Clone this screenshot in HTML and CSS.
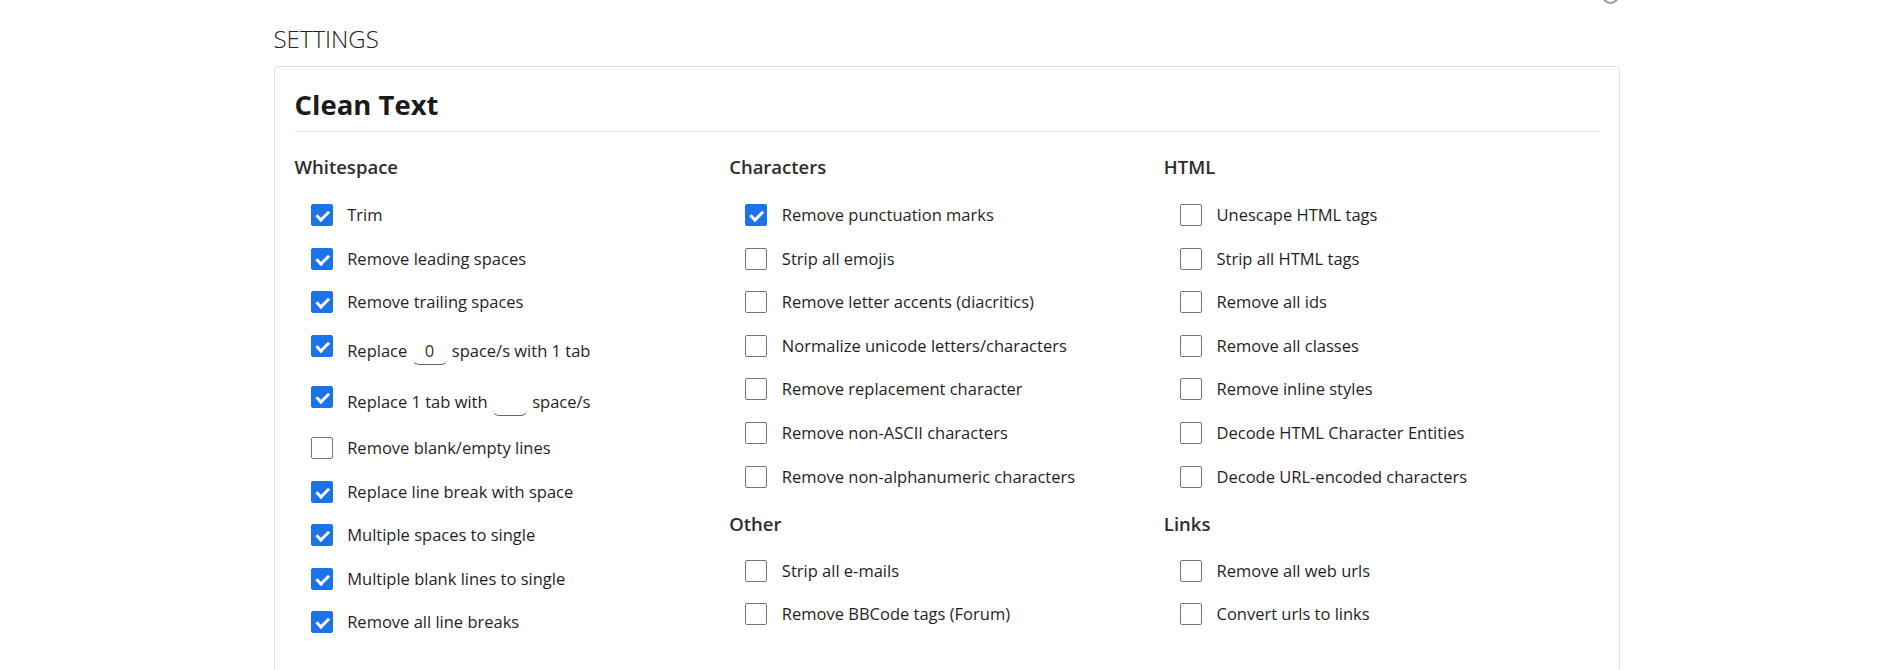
FILE: index.html
```html
<!DOCTYPE html>
<html lang="en">
<head>
<meta charset="utf-8">
<title>Settings - Clean Text</title>
<link rel="stylesheet" href="styles.css">
</head>
<body>
<div class="page">
  <span class="help-icon"></span>
  <div class="page-title">SETTINGS</div>
  <section class="card">
    <h2 class="card-title">Clean Text</h2>
    <div class="grid">
      <div class="col">
        <h3 class="group-title">Whitespace</h3>
        <div class="list">
          <label class="opt"><input type="checkbox" checked><span class="txt">Trim</span></label>
          <label class="opt"><input type="checkbox" checked><span class="txt">Remove leading spaces</span></label>
          <label class="opt"><input type="checkbox" checked><span class="txt">Remove trailing spaces</span></label>
          <label class="opt tall"><input type="checkbox" checked><span class="txt">Replace <input class="num" type="text" value="0"> space/s with 1 tab</span></label>
          <label class="opt tall"><input type="checkbox" checked><span class="txt">Replace 1 tab with <input class="num" type="text" value=""> space/s</span></label>
          <label class="opt"><input type="checkbox"><span class="txt">Remove blank/empty lines</span></label>
          <label class="opt"><input type="checkbox" checked><span class="txt">Replace line break with space</span></label>
          <label class="opt"><input type="checkbox" checked><span class="txt">Multiple spaces to single</span></label>
          <label class="opt"><input type="checkbox" checked><span class="txt">Multiple blank lines to single</span></label>
          <label class="opt"><input type="checkbox" checked><span class="txt">Remove all line breaks</span></label>
        </div>
      </div>
      <div class="col">
        <h3 class="group-title">Characters</h3>
        <div class="list">
          <label class="opt"><input type="checkbox" checked><span class="txt">Remove punctuation marks</span></label>
          <label class="opt"><input type="checkbox"><span class="txt">Strip all emojis</span></label>
          <label class="opt"><input type="checkbox"><span class="txt">Remove letter accents (diacritics)</span></label>
          <label class="opt"><input type="checkbox"><span class="txt">Normalize unicode letters/characters</span></label>
          <label class="opt"><input type="checkbox"><span class="txt">Remove replacement character</span></label>
          <label class="opt"><input type="checkbox"><span class="txt">Remove non-ASCII characters</span></label>
          <label class="opt"><input type="checkbox"><span class="txt">Remove non-alphanumeric characters</span></label>
        </div>
        <h3 class="group-title next">Other</h3>
        <div class="list">
          <label class="opt"><input type="checkbox"><span class="txt">Strip all e-mails</span></label>
          <label class="opt"><input type="checkbox"><span class="txt">Remove BBCode tags (Forum)</span></label>
        </div>
      </div>
      <div class="col">
        <h3 class="group-title">HTML</h3>
        <div class="list">
          <label class="opt"><input type="checkbox"><span class="txt">Unescape HTML tags</span></label>
          <label class="opt"><input type="checkbox"><span class="txt">Strip all HTML tags</span></label>
          <label class="opt"><input type="checkbox"><span class="txt">Remove all ids</span></label>
          <label class="opt"><input type="checkbox"><span class="txt">Remove all classes</span></label>
          <label class="opt"><input type="checkbox"><span class="txt">Remove inline styles</span></label>
          <label class="opt"><input type="checkbox"><span class="txt">Decode HTML Character Entities</span></label>
          <label class="opt"><input type="checkbox"><span class="txt">Decode URL-encoded characters</span></label>
        </div>
        <h3 class="group-title next">Links</h3>
        <div class="list">
          <label class="opt"><input type="checkbox"><span class="txt">Remove all web urls</span></label>
          <label class="opt"><input type="checkbox"><span class="txt">Convert urls to links</span></label>
        </div>
      </div>
    </div>
  </section>
</div>
</body>
</html>
```

FILE: styles.css
```css
html, body {
  margin: 0;
  padding: 0;
  background: #ffffff;
}

body {
  font-family: "Open Sans", "Noto Sans", sans-serif;
  color: #212529;
}

.page {
  position: relative;
  width: 1346px;
  margin: 0 auto;
  padding-top: 25px;
}

.help-icon {
  position: absolute;
  top: -13px;
  left: 1328px;
  width: 13px;
  height: 13px;
  border: 2px solid #9b9b9b;
  border-radius: 50%;
}

.page-title {
  font-size: 24px;
  font-weight: 300;
  line-height: 28.8px;
  color: #222;
  margin-bottom: 12px;
}

.card {
  border: 1px solid #dfdfdf;
  border-radius: 4px;
  padding: 22.6px 20px 40px;
}

.card-title {
  margin: 0;
  font-size: 27.5px;
  font-weight: 700;
  line-height: 32.4px;
  color: #1b1b1b;
  padding-bottom: 9.6px;
  border-bottom: 1px solid #dee2e6;
}

.grid {
  display: grid;
  grid-template-columns: repeat(3, 1fr);
  margin-top: 24px;
}

.group-title {
  margin: 0 0 14.5px;
  font-size: 18.5px;
  font-weight: 600;
  line-height: 22.2px;
  color: #2d2d2d;
}

.group-title.next {
  margin-top: 14px;
}

.group-title.next + .list .opt {
  height: 43.4px;
}

.opt {
  display: flex;
  align-items: center;
  height: 43.65px;
  padding-left: 16px;
  font-size: 16.5px;
  line-height: 22px;
  color: #1f1f1f;
}

.opt.tall {
  align-items: flex-start;
  height: 51.05px;
}

.opt.tall > input[type="checkbox"] {
  margin-top: 10.75px;
}

.opt.tall .txt {
  padding-top: 15.5px;
}

.opt input[type="checkbox"] {
  appearance: none;
  -webkit-appearance: none;
  position: relative;
  flex: none;
  box-sizing: border-box;
  width: 22px;
  height: 22px;
  margin: 0 14.7px 0 0;
  border: 1px solid #767676;
  border-radius: 2px;
  background: #fff;
}

.opt input[type="checkbox"]:checked {
  background: #1a73e8;
  border-color: #1a73e8;
}

.opt input[type="checkbox"]:checked::after {
  content: "";
  position: absolute;
  left: 7px;
  top: 3px;
  width: 4.5px;
  height: 9.5px;
  border: solid #fff;
  border-width: 0 3px 3px 0;
  transform: rotate(45deg);
}

.num {
  box-sizing: content-box;
  width: 34px;
  height: 22px;
  margin: 0 1px;
  padding: 0 0 2.4px;
  border: 0;
  border-bottom: 1px solid #5d6470;
  border-radius: 0 0 6px 6px;
  font-family: inherit;
  font-size: 16.5px;
  line-height: 22px;
  color: #333;
  text-align: center;
  background: transparent;
  vertical-align: baseline;
  outline: none;
}
```
